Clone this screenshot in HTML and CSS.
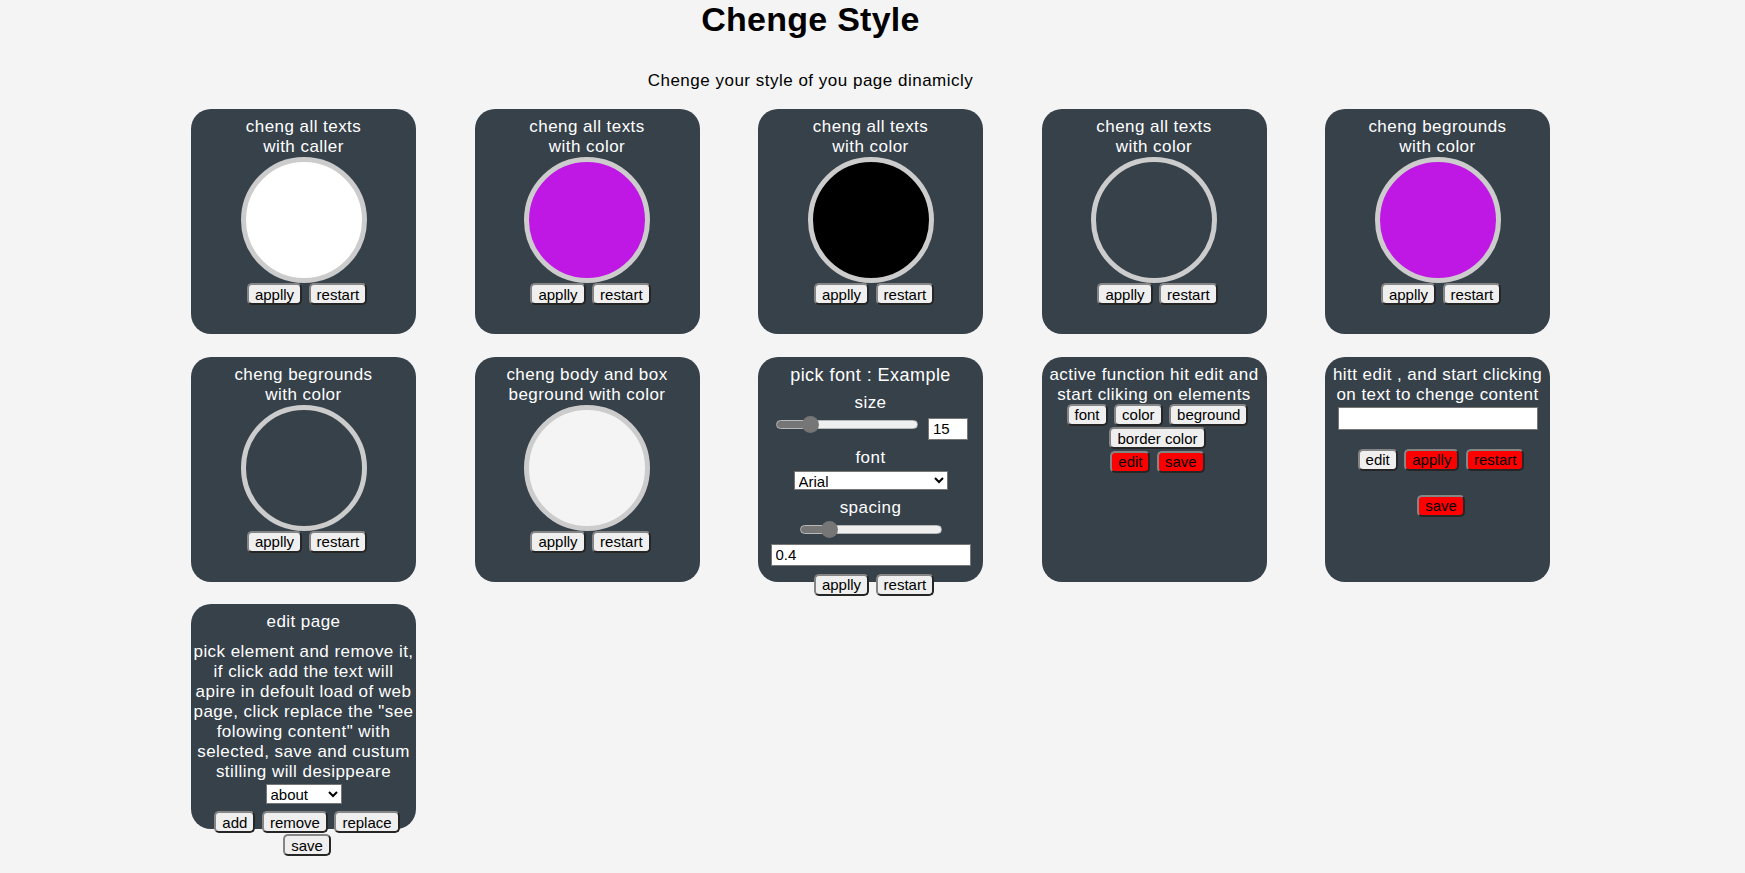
FILE: index.html
```html
<!DOCTYPE html>
<html lang="en">
<head>
<meta charset="utf-8">
<title>Chenge Style</title>
<link rel="stylesheet" href="styles.css">
</head>
<body>
<header class="page-head">
  <h1 class="page-title">Chenge Style</h1>
  <p class="lead">Chenge your style of you page dinamicly</p>
</header>
<main class="cards">
  <section class="card">
    <p class="card-title">cheng all texts<br>with caller</p>
    <div class="swatch swatch-white"></div>
    <div class="btns"><button class="btn">applly</button><button class="btn">restart</button></div>
  </section>
  <section class="card">
    <p class="card-title">cheng all texts<br>with color</p>
    <div class="swatch swatch-purple"></div>
    <div class="btns"><button class="btn">applly</button><button class="btn">restart</button></div>
  </section>
  <section class="card">
    <p class="card-title">cheng all texts<br>with color</p>
    <div class="swatch swatch-black"></div>
    <div class="btns"><button class="btn">applly</button><button class="btn">restart</button></div>
  </section>
  <section class="card">
    <p class="card-title">cheng all texts<br>with color</p>
    <div class="swatch"></div>
    <div class="btns"><button class="btn">applly</button><button class="btn">restart</button></div>
  </section>
  <section class="card">
    <p class="card-title">cheng begrounds<br>with color</p>
    <div class="swatch swatch-purple"></div>
    <div class="btns"><button class="btn">applly</button><button class="btn">restart</button></div>
  </section>

  <section class="card">
    <p class="card-title">cheng begrounds<br>with color</p>
    <div class="swatch"></div>
    <div class="btns"><button class="btn">applly</button><button class="btn">restart</button></div>
  </section>
  <section class="card">
    <p class="card-title">cheng body and box<br>beground with color</p>
    <div class="swatch swatch-page"></div>
    <div class="btns"><button class="btn">applly</button><button class="btn">restart</button></div>
  </section>
  <section class="card">
    <p class="card-title card-title-lg">pick font : Example</p>
    <p class="field-label label-size">size</p>
    <div class="size-row">
      <input class="range range-size" type="range" min="0" max="100" value="20" style="--fill: 24%">
      <input class="num-input" type="text" value="15">
    </div>
    <p class="field-label label-font">font</p>
    <select class="font-select"><option>Arial</option></select>
    <p class="field-label label-font">spacing</p>
    <input class="range range-spacing" type="range" min="0" max="100" value="17" style="--fill: 20.5%">
    <input class="text-input spacing-input" type="text" value="0.4">
    <div class="btns btns-font"><button class="btn">applly</button><button class="btn">restart</button></div>
  </section>
  <section class="card">
    <p class="card-title">active function hit edit and<br>start cliking on elements</p>
    <div class="btn-rows">
      <div class="btns"><button class="btn">font</button><button class="btn">color</button><button class="btn">beground</button></div>
      <div class="btns"><button class="btn">border color</button></div>
      <div class="btns"><button class="btn btn-red">edit</button><button class="btn btn-red">save</button></div>
    </div>
  </section>
  <section class="card">
    <p class="card-title">hitt edit , and start clicking<br>on text to chenge content</p>
    <input class="text-input content-input" type="text">
    <div class="btns btns-edit"><button class="btn">edit</button><button class="btn btn-red">applly</button><button class="btn btn-red">restart</button></div>
    <div class="btns btns-save"><button class="btn btn-red">save</button></div>
  </section>

  <section class="card">
    <p class="card-title">edit page</p>
    <p class="card-text">pick element and remove it,<br>if click add the text will<br>apire in defoult load of web<br>page, click replace the "see<br>folowing content" with<br>selected, save and custum<br>stilling will desippeare</p>
    <select class="page-select"><option>about</option></select>
    <div class="btns btns-page"><button class="btn">add</button><button class="btn">remove</button><button class="btn">replace</button></div>
    <div class="btns btns-tight"><button class="btn">save</button></div>
  </section>
</main>
</body>
</html>
```

FILE: styles.css
```css
html, body {
  margin: 0;
  padding: 0;
}

body {
  background: #f4f4f4;
  color: #000;
  font-family: "Liberation Sans", Arial, sans-serif;
  font-size: 17px;
  letter-spacing: 0.5px;
}

.page-head {
  padding-right: 124px;
  text-align: center;
}

.page-title {
  margin: 0;
  font-size: 34px;
  line-height: 39px;
  font-weight: bold;
  letter-spacing: 0.25px;
}

.lead {
  margin: 32px 0 0;
  font-size: 17px;
  line-height: 20px;
}

.cards {
  display: grid;
  grid-template-columns: repeat(5, 225px);
  column-gap: 58.5px;
  row-gap: 22.5px;
  padding: 0 0 45px 191px;
  margin-top: 18px;
}

.card {
  box-sizing: border-box;
  width: 225px;
  height: 225px;
  padding: 8px 2px 0;
  border-radius: 20px;
  background: #36414a;
  color: #fff;
  display: flex;
  flex-direction: column;
  align-items: center;
  letter-spacing: 0.45px;
}

.card > * {
  flex-shrink: 0;
}

.card-title {
  margin: 0;
  font-size: 17px;
  line-height: 20px;
  text-align: center;
  white-space: nowrap;
}

.card-title-lg {
  font-size: 18px;
}

.card-text {
  margin: 10px 0 0;
  font-size: 17px;
  line-height: 20px;
  text-align: center;
  white-space: nowrap;
}

.swatch {
  box-sizing: border-box;
  width: 126px;
  height: 126px;
  border: 5px solid #cccccc;
  border-radius: 50%;
  background: transparent;
}

.swatch-white { background: #ffffff; }
.swatch-purple { background: #c018e4; }
.swatch-black { background: #000000; }
.swatch-page { background: #f4f4f4; }

.btns {
  display: flex;
  justify-content: center;
  gap: 6.5px;
  padding-left: 7px;
}

.btn-rows {
  display: flex;
  flex-direction: column;
  gap: 1.5px;
  margin-top: -1px;
}

.btn {
  box-sizing: border-box;
  height: 22px;
  margin: 0;
  padding: 0 6px;
  font-family: "Liberation Sans", Arial, sans-serif;
  font-size: 15px;
  line-height: 17px;
  letter-spacing: 0;
  color: #000;
  background: #efefef;
  border: 2px solid;
  border-color: #858585 #262626 #262626 #858585;
  border-radius: 5px;
}

.btn-red {
  background: #ff0000;
}

.field-label {
  margin: 0;
  font-size: 17px;
  line-height: 20px;
}

.label-size {
  margin-top: 8px;
}

.label-font {
  margin-top: 8px;
}

.size-row {
  display: flex;
  align-items: flex-start;
  gap: 10px;
  margin-top: 5px;
  padding-left: 3px;
}

.range {
  -webkit-appearance: none;
  appearance: none;
  width: 142px;
  height: 17px;
  margin: 0;
  padding: 0;
  background: transparent;
}

.range-size {
  margin-top: -2px;
}

.range::-webkit-slider-runnable-track {
  box-sizing: border-box;
  height: 9px;
  border: 1px solid #b8b8b8;
  border-radius: 5px;
  background: linear-gradient(to right, #767676 0, #767676 var(--fill), #efefef var(--fill), #efefef 100%);
}

.range::-webkit-slider-thumb {
  -webkit-appearance: none;
  appearance: none;
  width: 17px;
  height: 17px;
  margin-top: -5px;
  border: none;
  border-radius: 50%;
  background: #767676;
}

.range-spacing {
  margin-top: 3px;
}

.num-input,
.text-input {
  box-sizing: border-box;
  margin: 0;
  padding: 1px 4px;
  height: 22px;
  font-family: "Liberation Sans", Arial, sans-serif;
  font-size: 15px;
  letter-spacing: 0;
  color: #000;
  background: #fff;
  border: 1px solid #767676;
  border-radius: 0;
}

.num-input {
  width: 40px;
}

.font-select,
.page-select {
  box-sizing: border-box;
  margin: 3px 0 0;
  height: 19px;
  font-family: "Liberation Sans", Arial, sans-serif;
  font-size: 15px;
  letter-spacing: 0;
  color: #000;
  background: #fff;
  border: 1px solid #767676;
  border-radius: 0;
}

.font-select {
  width: 154px;
}

.page-select {
  width: 76px;
  height: 20px;
  margin-top: 2px;
}

.spacing-input {
  width: 200px;
  margin-top: 6px;
}

.btns-font {
  margin-top: 8px;
}

.content-input {
  width: 200px;
  height: 23px;
  margin-top: 2px;
}

.btns-edit {
  margin-top: 19px;
}

.btns-save {
  margin-top: 24px;
}

.btns-page {
  margin-top: 7px;
}

.btns-tight {
  margin-top: 1px;
}
```
